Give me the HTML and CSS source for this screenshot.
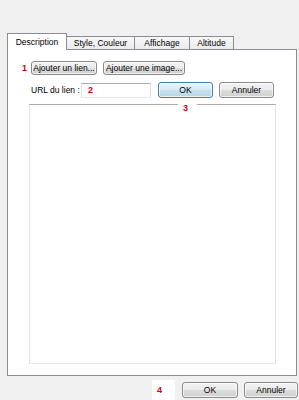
FILE: index.html
```html
<!DOCTYPE html>
<html lang="fr">
  <head>
    <meta charset="UTF-8" />
    <title>Description</title>
    <link rel="stylesheet" href="styles.css">
  </head>
  <body>
    <div class="dialog">
      <!-- Tabs -->
      <div class="tabs">
        <div class="tab tab-desc active">Description</div>
        <div class="tab tab-style">Style, Couleur</div>
        <div class="tab tab-view">Affichage</div>
        <div class="tab tab-alt">Altitude</div>
      </div>

      <!-- Tab content -->
      <div class="panel">
        <div class="row row-links">
          <span class="mark">1</span>
          <button class="btn btn-link">Ajouter un lien...</button>
          <button class="btn btn-image">Ajouter une image...</button>
        </div>
        <div class="row row-url">
          <label class="url-label">URL du lien :</label>
          <div class="field"><span class="mark">2</span></div>
          <button class="btn btn-ok btn-default">OK</button>
          <button class="btn btn-cancel">Annuler</button>
        </div>
        <div class="editor">
          <span class="mark badge">3</span>
        </div>
      </div>

      <!-- Dialog buttons -->
      <div class="footer">
        <span class="mark patch">4</span>
        <button class="btn btn-ok">OK</button>
        <button class="btn btn-cancel btn-last">Annuler</button>
      </div>
    </div>
  </body>
</html>
```

FILE: styles.css
```css
body {
  margin: 0;
  background-color: #f0f0f0;
  font-family: "Liberation Sans", Arial, sans-serif;
  font-size: 8.5px;
  color: #000;
}

.dialog {
  width: 299px;
  height: 400px;
  box-sizing: border-box;
  padding: 33px 2px 0 7px;
}

.tabs {
  display: flex;
  align-items: flex-end;
  height: 16px;
  position: relative;
  z-index: 1;
}

.tab {
  height: 13px;
  box-sizing: border-box;
  border: 1px solid #898c95;
  border-bottom: none;
  margin-left: -1px;
  background: linear-gradient(#f7f7f7, #ebebeb);
  display: flex;
  align-items: center;
  justify-content: center;
}

.tab.active {
  height: 17px;
  margin-bottom: -1px;
  margin-left: 0;
  background: #fff;
  padding-bottom: 1px;
}

.tab-desc { width: 60px; }
.tab-style { width: 69px; }
.tab-view { width: 56px; }
.tab-alt { width: 45px; }

.panel {
  height: 327px;
  box-sizing: border-box;
  border: 1px solid #898c95;
  background: #fff;
  padding: 11px 0 0 14px;
}

.row {
  display: flex;
  align-items: center;
}

.row-links {
  height: 14px;
}

.row-links .mark {
  width: 9px;
}

.row-url {
  margin-top: 7px;
  height: 16px;
  padding-left: 9px;
}

.url-label {
  width: 50px;
}

.field {
  width: 70px;
  height: 15px;
  box-sizing: border-box;
  border: 1px solid;
  border-color: #abadb3 #dbdfe6 #e3e9ef #e2e3ea;
  background: #fff;
  padding-left: 6px;
  display: flex;
  align-items: center;
}

.btn {
  height: 16px;
  box-sizing: border-box;
  border: 1px solid #8a8a8a;
  border-radius: 3px;
  background: linear-gradient(#f2f2f2 0, #ebebeb 50%, #dddddd 50%, #cfcfcf 100%);
  box-shadow: inset 0 0 0 1px rgba(255, 255, 255, 0.7);
  font: inherit;
  color: #000;
  padding: 0;
}

.btn-link {
  width: 66px;
  height: 14px;
}

.btn-image {
  width: 82px;
  height: 14px;
  margin-left: 6px;
}

.row-url .btn-ok {
  margin-left: 7px;
}

.btn-ok,
.btn-cancel {
  width: 55px;
}

.btn-cancel {
  margin-left: 6px;
}

.btn-default {
  border-color: #3c7fb1;
  background: linear-gradient(#e8f3fa 0, #d8eaf5 50%, #c6dfee 50%, #b8d6e8 100%);
}

.editor {
  position: relative;
  width: 247px;
  height: 260px;
  box-sizing: border-box;
  margin: 6px 0 0 7px;
  border: 1px solid;
  border-color: #a9abb0 #e2e3ea #e3e9ef #e2e3ea;
  background: #fff;
}

.mark {
  color: #d40000;
  font-weight: bold;
  font-size: 9px;
}

.badge {
  position: absolute;
  left: 148px;
  top: -4px;
  width: 19px;
  height: 14px;
  box-sizing: border-box;
  padding-left: 5px;
  background: #fff;
  display: flex;
  align-items: center;
}

.footer {
  display: flex;
  justify-content: flex-end;
  align-items: flex-start;
  height: 20px;
  margin: 4px -1px 0 0;
}

.patch {
  width: 23px;
  height: 20px;
  box-sizing: border-box;
  padding-left: 5px;
  background: #fff;
  display: flex;
  align-items: center;
}

.footer .btn {
  margin-top: 2px;
}

.footer .btn-ok {
  margin-left: 7px;
  width: 56px;
}

.footer .btn-last {
  width: 54px;
}
```
